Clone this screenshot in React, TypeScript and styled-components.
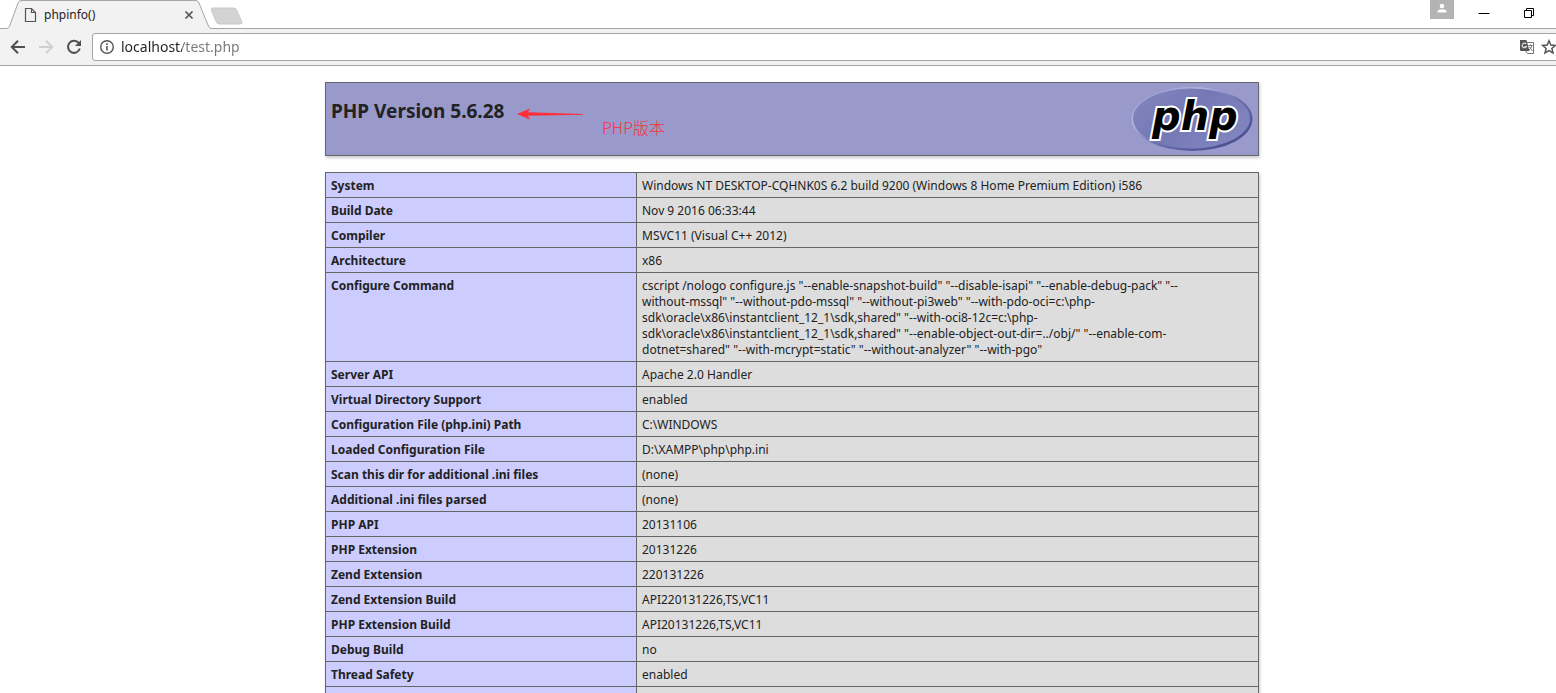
import React from "react";
import styled, { createGlobalStyle } from "styled-components";

const GlobalStyle = createGlobalStyle`
  *, *::before, *::after { box-sizing: border-box; }
  body {
    margin: 0;
    background: #fff;
    color: #222;
    font-family: "Noto Sans", "Noto Sans CJK SC", sans-serif;
    font-size: 12px;
  }
`;

const Viewport = styled.div`
  height: 100vh;
  overflow: hidden;
`;

/* The browser window runs past the right edge of the visible area. */
const Window = styled.div`
  width: calc(100% + 28px);
  height: 100%;
  display: flex;
  flex-direction: column;
`;

const TabStrip = styled.header`
  flex: none;
  height: 29px;
  display: flex;
  align-items: flex-start;
  padding-left: 7px;
  background: #fff;
  border-bottom: 1px solid #a6a6a6;
`;

const Tab = styled.div`
  position: relative;
  width: 204px;
  height: 29px;
  display: flex;
  align-items: center;
  padding: 0 15px 0 17px;
`;

const TabShape = styled.svg`
  position: absolute;
  inset: 0;
`;

const TabTitle = styled.span`
  position: relative;
  flex: 1;
  margin-left: 7px;
  line-height: 16px;
`;

const PageIcon = styled.svg`
  position: relative;
  flex: none;
`;

const IconButton = styled.button<{ $width: number; $height: number; $fill?: string }>`
  position: relative;
  flex: none;
  display: flex;
  align-items: center;
  justify-content: center;
  width: ${(p) => p.$width}px;
  height: ${(p) => p.$height}px;
  padding: 0;
  border: 0;
  background: ${(p) => p.$fill ?? "transparent"};
`;

const NewTabButton = styled(IconButton)`
  margin-top: 7px;
`;

const WindowControls = styled.div`
  display: flex;
  align-items: flex-start;
  margin-left: auto;
  padding-right: 40px;
`;

const Toolbar = styled.nav`
  flex: none;
  height: 37px;
  display: flex;
  align-items: center;
  padding: 0 0 0 4px;
  background: #f2f2f2;
  border-bottom: 1px solid #a6a6a6;
`;

const AddressBar = styled.div`
  flex: 1;
  height: 28px;
  display: flex;
  align-items: center;
  margin-left: 4px;
  padding: 0 23px 0 6px;
  background: #fff;
  border: 1px solid #a6a6a6;
  border-radius: 3px;
`;

/* The host is dark and the path is grey. */
const AddressInput = styled.input`
  flex: 1;
  min-width: 0;
  height: 20px;
  margin-left: 6px;
  padding: 0;
  border: 0;
  outline: 0;
  font: 14px/20px "Noto Sans", sans-serif;
  color: transparent;
  background: linear-gradient(90deg, #222 61px, #777 61px);
  background-clip: text;
  -webkit-background-clip: text;
`;

const Page = styled.main`
  flex: 1;
  min-height: 0;
  overflow: hidden;
  display: flex;
  flex-direction: column;
  align-items: center;
  gap: 16px;
  padding-top: 16px;
`;

const Banner = styled.section`
  position: relative;
  flex: none;
  width: 934px;
  max-width: 100%;
  height: 74px;
  display: flex;
  align-items: flex-start;
  justify-content: space-between;
  padding: 3px 5px 0 5px;
  background: #99c;
  border: 1px solid #666;
  box-shadow: 1px 2px 3px #ccc;
`;

const Title = styled.h1`
  margin: 12px 0 0;
  font-size: 19px;
  line-height: 26px;
  font-weight: 700;
`;

const Annotation = styled.div`
  position: absolute;
  left: 191px;
  top: 25px;
  display: flex;
  gap: 18px;
  color: #ff2f36;
`;

const AnnotationText = styled.span`
  margin-top: 7px;
  font: 300 16px/24px "Noto Sans CJK SC", sans-serif;
`;

const InfoTable = styled.table`
  flex: none;
  width: 934px;
  max-width: 100%;
  table-layout: fixed;
  border-collapse: collapse;
  box-shadow: 1px 2px 3px #ccc;
`;

const NameCell = styled.th`
  width: 311px;
  height: 25px;
  padding: 5px 5px 3px;
  border: 1px solid #666;
  background: #ccf;
  font-weight: 700;
  line-height: 16px;
  text-align: left;
  vertical-align: top;
`;

const ValueCell = styled.td`
  padding: 5px 5px 3px;
  border: 1px solid #666;
  background: #ddd;
  line-height: 16px;
  vertical-align: top;
  white-space: pre-line;
`;

const configureCommand = [
  'cscript /nologo configure.js "--enable-snapshot-build" "--disable-isapi" "--enable-debug-pack" "--',
  'without-mssql" "--without-pdo-mssql" "--without-pi3web" "--with-pdo-oci=c:\\php-',
  'sdk\\oracle\\x86\\instantclient_12_1\\sdk,shared" "--with-oci8-12c=c:\\php-',
  'sdk\\oracle\\x86\\instantclient_12_1\\sdk,shared" "--enable-object-out-dir=../obj/" "--enable-com-',
  'dotnet=shared" "--with-mcrypt=static" "--without-analyzer" "--with-pgo"',
].join("\n");

const rows: [string, string][] = [
  ["System", "Windows NT DESKTOP-CQHNK0S 6.2 build 9200 (Windows 8 Home Premium Edition) i586"],
  ["Build Date", "Nov 9 2016 06:33:44"],
  ["Compiler", "MSVC11 (Visual C++ 2012)"],
  ["Architecture", "x86"],
  ["Configure Command", configureCommand],
  ["Server API", "Apache 2.0 Handler"],
  ["Virtual Directory Support", "enabled"],
  ["Configuration File (php.ini) Path", "C:\\WINDOWS"],
  ["Loaded Configuration File", "D:\\XAMPP\\php\\php.ini"],
  ["Scan this dir for additional .ini files", "(none)"],
  ["Additional .ini files parsed", "(none)"],
  ["PHP API", "20131106"],
  ["PHP Extension", "20131226"],
  ["Zend Extension", "220131226"],
  ["Zend Extension Build", "API220131226,TS,VC11"],
  ["PHP Extension Build", "API20131226,TS,VC11"],
  ["Debug Build", "no"],
  ["Thread Safety", "enabled"],
  ["", ""],
];

const PhpLogo = () => (
  <svg width="122" height="68" viewBox="0 0 122 68" role="img" aria-label="PHP logo">
    <defs>
      <linearGradient id="rim" x1="0" y1="0" x2="1" y2="1">
        <stop offset="0" stopColor="#8f92c6" />
        <stop offset="0.3" stopColor="#b4b6e2" />
        <stop offset="0.55" stopColor="#6a6eaa" />
        <stop offset="1" stopColor="#3f4385" />
      </linearGradient>
      <linearGradient id="face" x1="0" y1="0" x2="1" y2="0.6">
        <stop offset="0" stopColor="#8487c0" />
        <stop offset="0.5" stopColor="#7479b5" />
        <stop offset="1" stopColor="#7f83be" />
      </linearGradient>
    </defs>
    <ellipse cx="61" cy="33" rx="60.5" ry="32" fill="url(#rim)" />
    <ellipse cx="60.5" cy="32.5" rx="58.5" ry="30" fill="url(#face)" />
    <text
      x="21"
      y="44"
      fontFamily="DejaVu Sans, sans-serif"
      fontSize="40"
      fontWeight="700"
      fontStyle="italic"
      fill="#000"
      stroke="#fff"
      strokeWidth="4"
      strokeLinejoin="miter"
      paintOrder="stroke"
    >
      php
    </text>
  </svg>
);

export default function App() {
  return (
    <Viewport>
      <GlobalStyle />
      <Window>
        <TabStrip>
          <Tab>
            <TabShape width="204" height="29" viewBox="0 0 204 29" aria-hidden="true">
              <path d="M0 29 L0 28.5 Q2 28 3 25 L11 3 Q12 .5 14 .5 H189 Q191 .5 192 3 L201 25 Q202 28 204 28.5 V29Z" fill="#f2f2f2" />
              <path d="M0 28.5 Q2 28 3 25 L11 3 Q12 .5 14 .5 H189 Q191 .5 192 3 L201 25 Q202 28 204 28.5" fill="none" stroke="#a6a6a6" />
            </TabShape>
            <PageIcon width="13" height="16" viewBox="0 0 13 16" fill="none" stroke="#555" strokeWidth="1.2" aria-hidden="true">
              <path d="M1.5 1.5H7.5L11.5 5.5V14.5H1.5Z M7.5 1.5V5.5H11.5" />
            </PageIcon>
            <TabTitle>phpinfo()</TabTitle>
            <IconButton $width={14} $height={16} aria-label="Close tab">
              <svg width="10" height="10" viewBox="0 0 10 10" stroke="#555" strokeWidth="1.7">
                <path d="M1.500 1.500L8.500 8.500M8.500 1.500L1.500 8.500" />
              </svg>
            </IconButton>
          </Tab>
          <NewTabButton $width={32} $height={18} aria-label="New tab">
            <svg width="34" height="18" viewBox="0 0 34 18">
              <path d="M1.500 .5H24Q26.500 .5 27.500 3L32.800 15Q33.500 17.500 31 17.500H9Q6.500 17.500 5.500 15L.3 2.500Q0 .5 1.500 .5Z" fill="#d3d3d3" stroke="#c6c6c6" />
            </svg>
          </NewTabButton>
          <WindowControls>
            <IconButton $width={24} $height={19} $fill="#b3b3b3" aria-label="Profile">
              <svg width="12" height="14" viewBox="0 0 12 14" fill="#fff">
                <circle cx="6" cy="3" r="2.300" />
                <path d="M1.500 9.500V8.500Q2 6.300 6 6.300T10.500 8.500V9.500Z" />
              </svg>
            </IconButton>
            <IconButton $width={60} $height={26} aria-label="Minimize">
              <svg width="12" height="12" viewBox="0 0 12 12" stroke="#000">
                <path d="M0.500 6.500H11.500" />
              </svg>
            </IconButton>
            <IconButton $width={30} $height={26} aria-label="Restore">
              <svg width="12" height="12" viewBox="0 0 12 12" fill="none" stroke="#000">
                <path d="M1.500 3.500H8.500V10.500H1.500Z M3.500 3.500V1.500H10.500V8.500H8.500" />
              </svg>
            </IconButton>
          </WindowControls>
        </TabStrip>

        <Toolbar>
          <IconButton $width={28} $height={28} aria-label="Back">
            <svg width="16" height="16" viewBox="0 0 16 16" fill="none" stroke="#505050" strokeWidth="2">
              <path d="M15 8H2.500M8 1.800L1.800 8L8 14.200" />
            </svg>
          </IconButton>
          <IconButton $width={28} $height={28} aria-label="Forward" disabled>
            <svg width="16" height="16" viewBox="0 0 16 16" fill="none" stroke="#d0d0d0" strokeWidth="2">
              <path d="M1 8H13.500M8 1.800L14.200 8L8 14.200" />
            </svg>
          </IconButton>
          <IconButton $width={28} $height={28} aria-label="Reload">
            <svg width="16" height="16" viewBox="0 0 16 16" fill="none" stroke="#505050" strokeWidth="2">
              <path d="M12.800 4.200A6 6 0 1 0 13.800 9.500" />
              <path d="M15 1V7H9Z" fill="#505050" stroke="none" />
            </svg>
          </IconButton>
          <AddressBar>
            <IconButton $width={16} $height={16} aria-label="Site information">
              <svg width="16" height="16" viewBox="0 0 16 16" fill="none" stroke="#555" strokeWidth="1.400">
                <circle cx="8" cy="8" r="6.300" />
                <path d="M8 7V11.500M8 4.300V5.900" strokeWidth="1.600" />
              </svg>
            </IconButton>
            <AddressInput aria-label="Address" defaultValue="localhost/test.php" spellCheck={false} />
            <IconButton $width={22} $height={20} aria-label="Translate this page">
              <svg width="16" height="16" viewBox="0 0 16 16">
                <path d="M6 3.500H14.500V14.500H8.500L6 11Z" fill="#fff" stroke="#777" />
                <path d="M1 1H7.500L10.500 12H2Q1 12 1 11Z" fill="#555" />
                <path d="M7.300 5A2.300 2.300 0 1 0 7.500 7.500H5.500" fill="none" stroke="#ddd" strokeWidth="1.100" />
                <path d="M9.500 6.500H13.500M11.500 5.500V6.500M13 6.500Q12 9.500 10 11M10.500 8L13.500 12" fill="none" stroke="#777" />
              </svg>
            </IconButton>
            <IconButton $width={22} $height={20} aria-label="Bookmark this page">
              <svg width="16" height="16" viewBox="0 0 16 16" fill="none" stroke="#555" strokeWidth="1.500">
                <path d="M8 1.800L9.800 6.100L14.400 6.400L10.900 9.400L12 13.900L8 11.500L4 13.900L5.100 9.400L1.600 6.400L6.200 6.100Z" />
              </svg>
            </IconButton>
          </AddressBar>
        </Toolbar>

        <Page>
          <Banner>
            <Title>PHP Version 5.6.28</Title>
            <PhpLogo />
            <Annotation>
              <svg width="67" height="12" viewBox="0 0 67 12" fill="currentColor" aria-hidden="true">
                <path d="M0 6L13 .500L11 4.300L66 6L66 6.700L11 7.700L13 11.500Z" />
              </svg>
              <AnnotationText>PHP版本</AnnotationText>
            </Annotation>
          </Banner>
          <InfoTable>
            <tbody>
              {rows.map(([name, value], i) => (
                <tr key={i}>
                  <NameCell scope="row">{name}</NameCell>
                  <ValueCell>{value}</ValueCell>
                </tr>
              ))}
            </tbody>
          </InfoTable>
        </Page>
      </Window>
    </Viewport>
  );
}
